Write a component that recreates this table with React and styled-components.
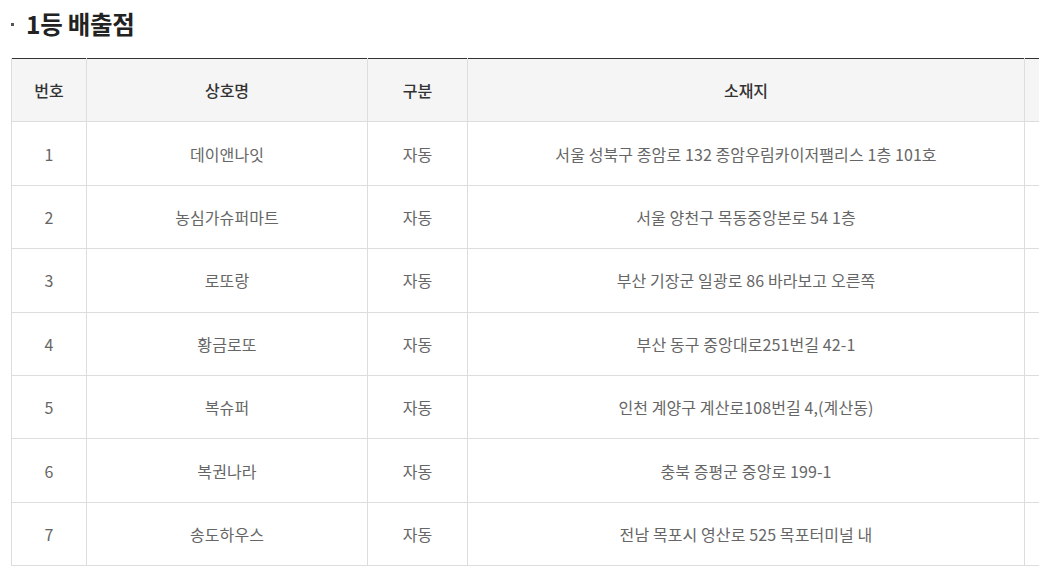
import React from 'react';
import styled, { createGlobalStyle } from 'styled-components';

const GlobalStyle = createGlobalStyle`
  html, body {
    margin: 0;
    padding: 0;
    background: #fff;
    overflow: hidden;
  }
  body {
    font-family: "Noto Sans CJK KR", "Noto Sans", sans-serif;
  }
`;

const Wrapper = styled.div`
  padding: 4px 0 0 11px;
  width: 1200px;
`;

const Title = styled.h3`
  display: flex;
  align-items: center;
  gap: 12px;
  margin: 0 0 16px;
  height: 38px;
  font-size: 24.5px;
  font-weight: 700;
  color: #222;
  letter-spacing: -0.3px;

  &::before {
    content: '';
    width: 3px;
    height: 3px;
    background: #555;
    margin-top: 2px;
  }
`;

const Table = styled.table`
  border-collapse: collapse;
  table-layout: fixed;
  width: 1120px;
  border-top: 1px solid #333;
`;

const HeadCell = styled.th`
  height: 62.4px;
  background: #f5f5f5;
  border: 1px solid #ddd;
  border-top: none;
  font-size: 16px;
  font-weight: 500;
  color: #333;
  text-align: center;
  padding: 0;
`;

const Cell = styled.td`
  height: 62.4px;
  border: 1px solid #ddd;
  font-size: 16px;
  font-weight: 400;
  color: #666;
  text-align: center;
  padding: 0;
  letter-spacing: 0.1px;
`;

const shops = [
  { no: 1, name: '데이앤나잇', type: '자동', addr: '서울 성북구 종암로 132 종암우림카이저팰리스 1층 101호' },
  { no: 2, name: '농심가슈퍼마트', type: '자동', addr: '서울 양천구 목동중앙본로 54 1층' },
  { no: 3, name: '로또랑', type: '자동', addr: '부산 기장군 일광로 86 바라보고 오른쪽' },
  { no: 4, name: '황금로또', type: '자동', addr: '부산 동구 중앙대로251번길 42-1' },
  { no: 5, name: '복슈퍼', type: '자동', addr: '인천 계양구 계산로108번길 4,(계산동)' },
  { no: 6, name: '복권나라', type: '자동', addr: '충북 증평군 중앙로 199-1' },
  { no: 7, name: '송도하우스', type: '자동', addr: '전남 목포시 영산로 525 목포터미널 내' },
];

const App = () => (
  <Wrapper>
    <GlobalStyle />
    <Title>1등 배출점</Title>
    <Table>
      <colgroup>
        <col style={{ width: 75 }} />
        <col style={{ width: 281 }} />
        <col style={{ width: 100 }} />
        <col style={{ width: 557 }} />
        <col />
      </colgroup>
      <thead>
        <tr>
          <HeadCell>번호</HeadCell>
          <HeadCell>상호명</HeadCell>
          <HeadCell>구분</HeadCell>
          <HeadCell>소재지</HeadCell>
          <HeadCell />
        </tr>
      </thead>
      <tbody>
        {shops.map((shop) => (
          <tr key={shop.no}>
            <Cell>{shop.no}</Cell>
            <Cell>{shop.name}</Cell>
            <Cell>{shop.type}</Cell>
            <Cell>{shop.addr}</Cell>
            <Cell />
          </tr>
        ))}
      </tbody>
    </Table>
  </Wrapper>
);

export default App;
